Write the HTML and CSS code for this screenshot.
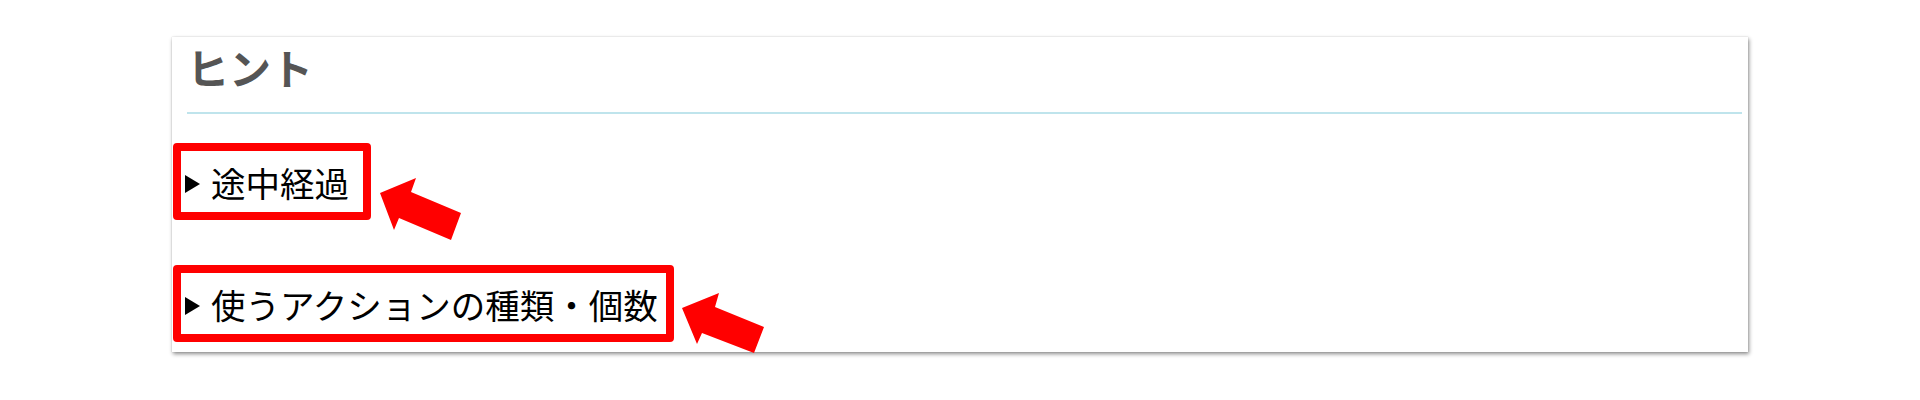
FILE: index.html
```html
<!DOCTYPE html>
<html lang="ja">
  <head>
    <meta charset="UTF-8" />
    <meta name="viewport" content="width=device-width, initial-scale=1.0" />
    <title>ヒント</title>
    <link rel="stylesheet" href="styles.css">
  </head>
  <body>
    <div class="card">
      <h2 class="hint-title">ヒント</h2>
      <hr class="hint-rule" />

      <details class="hint">
        <summary class="hint-summary">
          <span class="caret"></span>
          <span class="hint-label">途中経過</span>
          <svg class="callout-arrow" width="82" height="63" viewBox="0 0 82 63">
            <polygon points="0,15 36,0 31,14 81,35 71,62 19,40 14,52" fill="#ff0000" />
          </svg>
        </summary>
      </details>

      <details class="hint hint-second">
        <summary class="hint-summary">
          <span class="caret"></span>
          <span class="hint-label">使うアクションの種類・個数</span>
          <svg class="callout-arrow" width="82" height="63" viewBox="0 0 82 63">
            <polygon points="0,15 37,0 33,14 82,34 72,60 20,40 15,51" fill="#ff0000" />
          </svg>
        </summary>
      </details>
    </div>
  </body>
</html>
```

FILE: styles.css
```css
body {
  font-family: "Noto Sans CJK JP", "Noto Sans", sans-serif;
  background-color: #ffffff;
  margin: 0;
  padding: 0 0 40px;
}
.card {
  width: 1576px;
  box-sizing: border-box;
  margin: 37px auto 0;
  padding: 0 6px 10px 1px;
  background-color: white;
  box-shadow: 1px 2px 4px rgba(0, 0, 0, 0.45), 0 0 1px rgba(0, 0, 0, 0.2);
}
.hint-title {
  margin: 0 0 0 14px;
  padding-top: 6px;
  font-size: 42px;
  line-height: 48px;
  font-weight: 600;
  color: #555;
}
.hint-rule {
  margin: 21px 0 0 14px;
  border: none;
  height: 2px;
  background-color: #bfe4ec;
}
.hint {
  margin-top: 29px;
}
.hint-second {
  margin-top: 45px;
}
.hint-summary {
  list-style: none;
  position: relative;
  display: flex;
  width: max-content;
  align-items: center;
  box-sizing: border-box;
  height: 77px;
  padding: 0 14px 0 4px;
  border: 8px solid #ff0000;
  border-radius: 4px;
  cursor: pointer;
}
.hint-second .hint-summary {
  padding-right: 8px;
}
.hint-summary::-webkit-details-marker {
  display: none;
}
.caret {
  width: 0;
  height: 0;
  margin-top: 4px;
  margin-right: 11px;
  border-left: 15px solid #000;
  border-top: 9px solid transparent;
  border-bottom: 9px solid transparent;
}
.hint-label {
  font-size: 34.5px;
  color: #000;
}
.callout-arrow {
  position: absolute;
  left: calc(100% + 17px);
  top: 27px;
}
.hint-second .callout-arrow {
  left: calc(100% + 16px);
  top: 20px;
}
```
